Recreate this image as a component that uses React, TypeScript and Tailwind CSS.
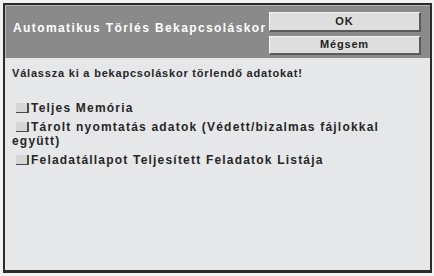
export default function App() {
  const options = [
    'Teljes Memória',
    'Tárolt nyomtatás adatok (Védett/bizalmas fájlokkal együtt)',
    'Feladatállapot Teljesített Feladatok Listája',
  ]

  return (
    <div className="w-[434px] h-[276px] bg-[#f2f2f2] pt-[3px] pl-[3px] pr-[2px] pb-[3px] font-['Liberation_Sans',sans-serif]">
      <div className="w-full h-full border-2 border-[#2b2b2b] border-b-[3px] bg-[#e6e7e9] flex flex-col">
        {/* header */}
        <div className="h-[53px] bg-[#8a8a8b] flex items-center pl-[7px] pr-[9px] border-t border-l border-[#b5b5b5]">
          <div className="flex-1 pb-[9px] text-white font-bold text-[12px] tracking-[1.4px] whitespace-nowrap">
            Automatikus Törlés Bekapcsoláskor
          </div>
          <div className="w-[152px] flex flex-col gap-[4px] pt-[2px]">
            <button className="h-[20px] bg-[#dedede] border border-[#f4f4f4] border-r-[2px] border-b-[2px] border-r-[#5a5a5a] border-b-[#5a5a5a] text-[11px] font-bold tracking-[1px] text-[#222] leading-none">
              OK
            </button>
            <button className="h-[19px] bg-[#dedede] border border-[#f4f4f4] border-r-[2px] border-b-[2px] border-r-[#5a5a5a] border-b-[#5a5a5a] text-[11px] font-bold tracking-[0.8px] text-[#222] leading-none">
              Mégsem
            </button>
          </div>
        </div>

        {/* body */}
        <div className="flex-1 pl-[7px] pr-[8px] pt-[8px] text-[#262626]">
          <p className="text-[11px] font-bold tracking-[0.8px] leading-[14px]">
            Válassza ki a bekapcsoláskor törlendő adatokat!
          </p>
          <div className="mt-[21px] flex flex-col gap-[5px]">
            {options.map((o) => (
              <div key={o} className="text-[12px] font-bold tracking-[1.2px] leading-[14px]">
                <span className="inline-block align-[-1px] w-[13px] h-[10px] ml-[4px] mr-[2px] bg-[#d6d6d6] border-r-[2px] border-b border-[#4a4a4a]" />
                {o}
              </div>
            ))}
          </div>
        </div>
      </div>
    </div>
  )
}
